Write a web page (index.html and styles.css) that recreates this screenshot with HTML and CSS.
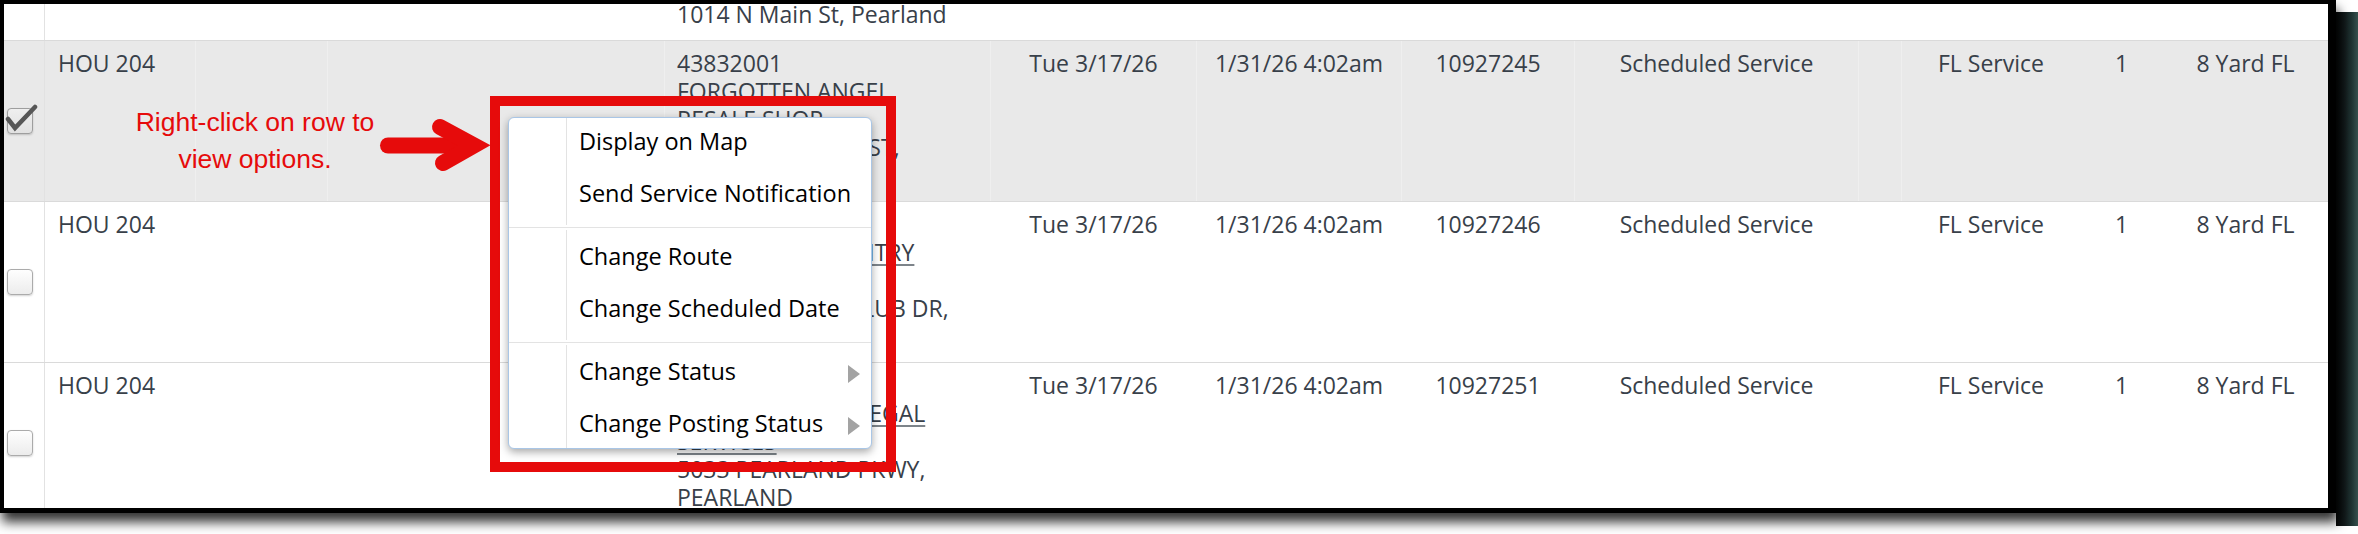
FILE: index.html
```html
<!DOCTYPE html>
<html lang="en">
<head>
<meta charset="utf-8">
<title>Scheduled services</title>
<link rel="stylesheet" href="styles.css">
</head>
<body>
<div class="stage">
  <div class="frame">
    <div class="viewport">
      <div class="rows">
        <div class="row">
          <div class="cell check"><span class="box"></span></div>
          <div class="cell route">HOU 204</div>
          <div class="cell"></div>
          <div class="cell"></div>
          <div class="cell addr">
            <span class="line">43831987</span>
            <span class="line link">PEARLAND FEED &amp;</span>
            <span class="line link">SUPPLY</span>
            <span class="line">Site 2</span>
            <span class="line">1014 N Main St, Pearland</span>
          </div>
          <div class="cell center">Tue 3/17/26</div>
          <div class="cell center">1/31/26 4:02am</div>
          <div class="cell center">10927244</div>
          <div class="cell center">Scheduled Service</div>
          <div class="cell"></div>
          <div class="cell center open">FL Service</div>
          <div class="cell center open">1</div>
          <div class="cell center">8 Yard FL</div>
        </div>

        <div class="row selected">
          <div class="cell check">
            <span class="box checked">
              <svg class="tick" width="36" height="32" viewBox="0 0 36 32"><path d="M3 18 L10 27 L30 6" fill="none" stroke="#575757" stroke-width="4.5" stroke-linecap="round" stroke-linejoin="miter"/></svg>
            </span>
          </div>
          <div class="cell route">HOU 204</div>
          <div class="cell"></div>
          <div class="cell"></div>
          <div class="cell addr">
            <span class="line">43832001</span>
            <span class="line link">FORGOTTEN ANGEL</span>
            <span class="line link">RESALE SHOP</span>
            <span class="line">3510 BROADWAY ST,</span>
            <span class="line">PEARLAND</span>
          </div>
          <div class="cell center">Tue 3/17/26</div>
          <div class="cell center">1/31/26 4:02am</div>
          <div class="cell center">10927245</div>
          <div class="cell center">Scheduled Service</div>
          <div class="cell"></div>
          <div class="cell center open">FL Service</div>
          <div class="cell center open">1</div>
          <div class="cell center">8 Yard FL</div>
        </div>

        <div class="row">
          <div class="cell check"><span class="box"></span></div>
          <div class="cell route">HOU 204</div>
          <div class="cell"></div>
          <div class="cell"></div>
          <div class="cell addr">
            <span class="line">43832010</span>
            <span class="line link">GOLFCREST COUNTRY</span>
            <span class="line link">CLUB</span>
            <span class="line">2305 COUNTRY CLUB DR,</span>
            <span class="line">PEARLAND</span>
          </div>
          <div class="cell center">Tue 3/17/26</div>
          <div class="cell center">1/31/26 4:02am</div>
          <div class="cell center">10927246</div>
          <div class="cell center">Scheduled Service</div>
          <div class="cell"></div>
          <div class="cell center open">FL Service</div>
          <div class="cell center open">1</div>
          <div class="cell center">8 Yard FL</div>
        </div>

        <div class="row">
          <div class="cell check"><span class="box"></span></div>
          <div class="cell route">HOU 204</div>
          <div class="cell"></div>
          <div class="cell"></div>
          <div class="cell addr">
            <span class="line">43832015</span>
            <span class="line link">SHADOW CREEK LEGAL</span>
            <span class="line link">SERVICES</span>
            <span class="line">5033 PEARLAND PKWY,</span>
            <span class="line">PEARLAND</span>
          </div>
          <div class="cell center">Tue 3/17/26</div>
          <div class="cell center">1/31/26 4:02am</div>
          <div class="cell center">10927251</div>
          <div class="cell center">Scheduled Service</div>
          <div class="cell"></div>
          <div class="cell center open">FL Service</div>
          <div class="cell center open">1</div>
          <div class="cell center">8 Yard FL</div>
        </div>
      </div>

      <div class="note">Right-click on row to<br>view options.</div>

      <svg class="pointer" width="130" height="70" viewBox="0 0 130 70">
        <line x1="18" y1="35.5" x2="100" y2="35.5" stroke="#e60b0b" stroke-width="16" stroke-linecap="round"/>
        <polyline points="70,17 104,35.5 73,53" fill="none" stroke="#e60b0b" stroke-width="16" stroke-linecap="round" stroke-linejoin="miter"/>
      </svg>

      <div class="callout"></div>

      <div class="menu">
        <div class="item"><span class="ico"></span><span class="label">Display on Map</span></div>
        <div class="item"><span class="ico"></span><span class="label">Send Service Notification</span></div>
        <div class="sep"></div>
        <div class="item"><span class="ico"></span><span class="label">Change Route</span></div>
        <div class="item"><span class="ico"></span><span class="label">Change Scheduled Date</span></div>
        <div class="sep"></div>
        <div class="item"><span class="ico"></span><span class="label">Change Status</span><span class="sub"></span></div>
        <div class="item"><span class="ico"></span><span class="label">Change Posting Status</span><span class="sub"></span></div>
      </div>
    </div>
  </div>
  <div class="desk"></div>
</div>
</body>
</html>
```

FILE: styles.css
```css
* { box-sizing: border-box; }

html, body {
  margin: 0;
  padding: 0;
  background: #fff;
}

body {
  width: 2358px;
  height: 534px;
  overflow: hidden;
}

.stage {
  display: flex;
  align-items: flex-start;
}

.frame {
  flex: none;
  width: 2336px;
  height: 513px;
  border-style: solid;
  border-color: #000;
  border-width: 4px 8px 5px 4px;
  box-shadow: 2px 9px 11px rgba(0, 0, 0, 0.8);
  position: relative;
  z-index: 1;
}

.desk {
  flex: none;
  width: 22px;
  height: 514px;
  margin-top: 12px;
  background: linear-gradient(90deg, #050707 0%, #121a1b 40%, #1f3332 70%, #35504d 100%);
}

.viewport {
  position: relative;
  width: 100%;
  height: 100%;
  overflow: hidden;
  background: #fff;
  font-family: "Open Sans", "Liberation Sans", sans-serif;
  font-size: 23px;
  line-height: 28px;
  color: #384049;
}

.rows {
  margin-top: -124px;
}

.row {
  display: grid;
  grid-template-columns: 41px 151px 132px 337px 326px 206px 205px 173px 284px 43px 178px 83px 165px;
  height: 161px;
  border-bottom: 1px solid #dadada;
}

.row.selected {
  background: #e9e9e9;
}

.cell {
  padding: 8px 0 0;
  border-right: 1px solid rgba(255, 255, 255, 0.3);
  white-space: nowrap;
}

.cell:last-child,
.cell.open {
  border-right: none;
}

.cell.check {
  display: flex;
  align-items: center;
  padding: 0 0 0 3px;
  border-right-color: #e2e2e2;
}

.cell.route {
  padding-left: 13px;
}

.cell.addr {
  padding-left: 12px;
}

.cell.center {
  text-align: center;
}

.line {
  display: block;
}

.link {
  text-decoration: underline;
  text-decoration-color: #7d848a;
  text-decoration-thickness: 2px;
  text-underline-offset: 3px;
}

.box {
  position: relative;
  display: block;
  width: 26px;
  height: 26px;
  border: 1px solid #ababab;
  border-radius: 4px;
  background: linear-gradient(#fefefe, #ececec);
  box-shadow: 0 1px 2px rgba(0, 0, 0, 0.18);
}

.box.checked {
  border-color: #9e9e9e;
  background: linear-gradient(#efefef, #e1e1e1);
}

.tick {
  position: absolute;
  left: -3px;
  top: -8px;
}

.note {
  position: absolute;
  left: 116px;
  top: 100px;
  width: 270px;
  font-family: "Liberation Sans", Arial, sans-serif;
  font-size: 26.5px;
  line-height: 37px;
  color: #e60b0b;
  text-align: center;
}

.pointer {
  position: absolute;
  left: 366px;
  top: 106px;
}

.callout {
  position: absolute;
  left: 486px;
  top: 92px;
  width: 406px;
  height: 376px;
  border: 10px solid #e60b0b;
}

.menu {
  position: absolute;
  left: 504px;
  top: 113px;
  width: 364px;
  background: #fff;
  border: 1px solid #a9c6e6;
  border-radius: 6px;
  box-shadow: 0 3px 9px rgba(0, 0, 0, 0.35);
  overflow: hidden;
  font-family: "Open Sans", "Liberation Sans", sans-serif;
  font-size: 23.5px;
  color: #000;
}

.item {
  display: flex;
  height: 52px;
  line-height: 46px;
}

.item:last-child {
  height: 48px;
}

.ico {
  flex: none;
  width: 58px;
  border-right: 1px solid #e3e3e3;
}

.label {
  flex: 1;
  padding-left: 12px;
  white-space: nowrap;
}

.sub {
  flex: none;
  width: 0;
  height: 0;
  margin: 17px 11px 0 0;
  border-left: 12px solid #a3a3a3;
  border-top: 9px solid transparent;
  border-bottom: 9px solid transparent;
}

.sep {
  height: 11px;
  background:
    linear-gradient(#e3e3e3, #e3e3e3) 0 5px / 100% 1px no-repeat,
    linear-gradient(#e3e3e3, #e3e3e3) 57px 0 / 1px 3px no-repeat,
    linear-gradient(#e3e3e3, #e3e3e3) 57px 8px / 1px 3px no-repeat;
}
```
